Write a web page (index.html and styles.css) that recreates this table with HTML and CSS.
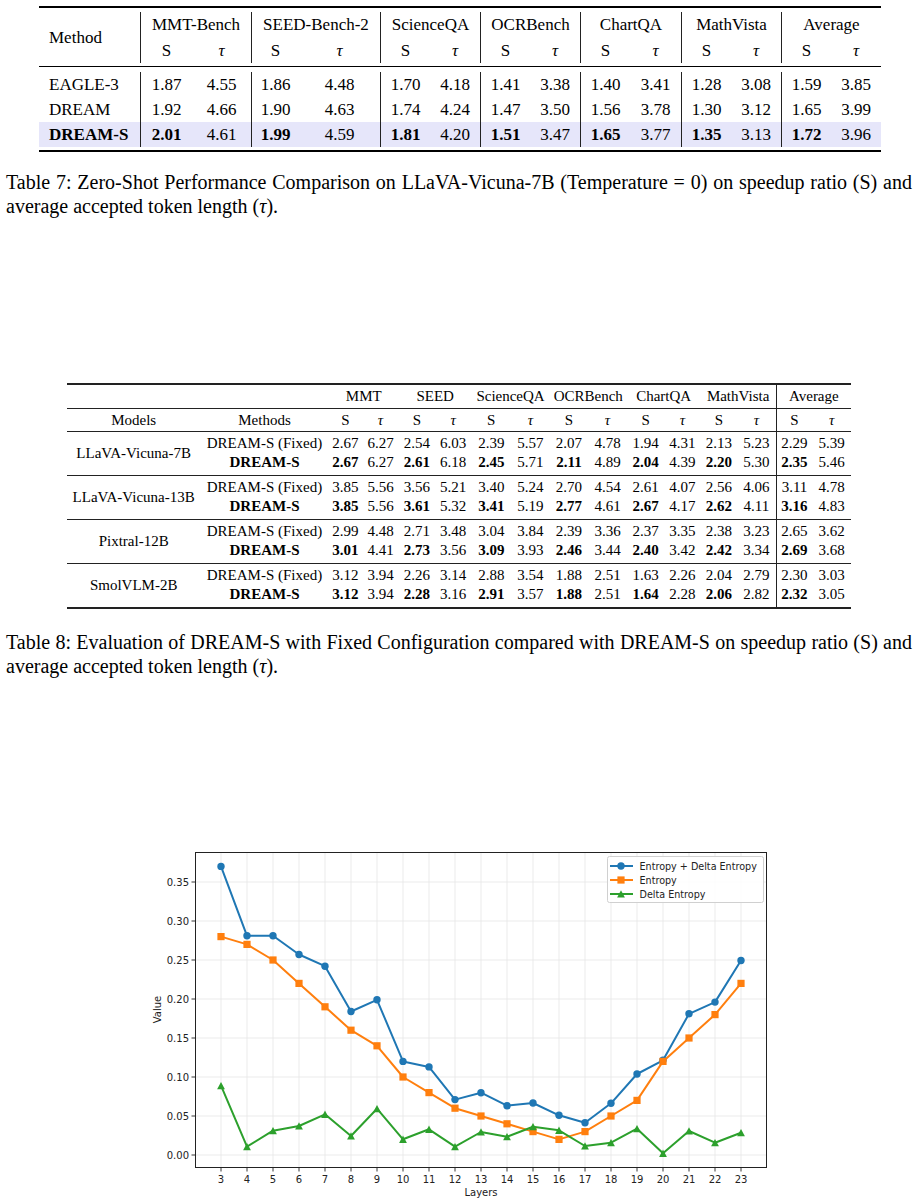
FILE: index.html
```html
<!DOCTYPE html>
<html>
<head>
<meta charset="utf-8">
<link rel="stylesheet" href="styles.css">
</head>
<body>
<div class="page">

<table class="t7">
  <colgroup>
    <col class="c-method"><col class="w52"><col class="w59"><col class="w48"><col class="w81">
    <col class="w50"><col class="w50"><col class="w50"><col class="w50"><col class="w50"><col class="w51">
    <col class="w50"><col class="w50"><col class="w50"><col class="w50">
  </colgroup>
  <tr class="rule-thick"><td colspan="15"></td></tr>
  <tr class="gap4"><td colspan="15"></td></tr>
  <tr class="h1">
    <td rowspan="2" class="mcol">Method</td>
    <td colspan="2" class="vl">MMT-Bench</td>
    <td colspan="2" class="vl">SEED-Bench-2</td>
    <td colspan="2" class="vl">ScienceQA</td>
    <td colspan="2" class="vl">OCRBench</td>
    <td colspan="2" class="vl">ChartQA</td>
    <td colspan="2" class="vl">MathVista</td>
    <td colspan="2" class="vl">Average</td>
  </tr>
  <tr class="h2">
    <td class="vl">S</td><td><i>τ</i></td>
    <td class="vl">S</td><td><i>τ</i></td>
    <td class="vl">S</td><td><i>τ</i></td>
    <td class="vl">S</td><td><i>τ</i></td>
    <td class="vl">S</td><td><i>τ</i></td>
    <td class="vl">S</td><td><i>τ</i></td>
    <td class="vl">S</td><td><i>τ</i></td>
  </tr>
  <tr class="gap3"><td colspan="15"></td></tr>
  <tr class="rule-thin"><td colspan="15"></td></tr>
  <tr class="gap5"><td colspan="15"></td></tr>
  <tr class="row">
    <td class="mcol">EAGLE-3</td>
    <td class="vl">1.87</td><td>4.55</td><td class="vl">1.86</td><td>4.48</td><td class="vl">1.70</td><td>4.18</td>
    <td class="vl">1.41</td><td>3.38</td><td class="vl">1.40</td><td>3.41</td><td class="vl">1.28</td><td>3.08</td>
    <td class="vl">1.59</td><td>3.85</td>
  </tr>
  <tr class="row">
    <td class="mcol">DREAM</td>
    <td class="vl">1.92</td><td>4.66</td><td class="vl">1.90</td><td>4.63</td><td class="vl">1.74</td><td>4.24</td>
    <td class="vl">1.47</td><td>3.50</td><td class="vl">1.56</td><td>3.78</td><td class="vl">1.30</td><td>3.12</td>
    <td class="vl">1.65</td><td>3.99</td>
  </tr>
  <tr class="row hl">
    <td class="mcol"><b>DREAM-S</b></td>
    <td class="vl"><b>2.01</b></td><td>4.61</td><td class="vl"><b>1.99</b></td><td>4.59</td><td class="vl"><b>1.81</b></td><td>4.20</td>
    <td class="vl"><b>1.51</b></td><td>3.47</td><td class="vl"><b>1.65</b></td><td>3.77</td><td class="vl"><b>1.35</b></td><td>3.13</td>
    <td class="vl"><b>1.72</b></td><td>3.96</td>
  </tr>
  <tr class="gap3"><td colspan="15"></td></tr>
  <tr class="rule-thick"><td colspan="15"></td></tr>
</table>

<div class="caption cap7">
  <span class="l1">Table 7: Zero-Shot Performance Comparison on LLaVA-Vicuna-7B (Temperature = 0) on speedup ratio (S) and</span>
  <span class="l2">average accepted token length (<i>τ</i>).</span>
</div>

<table class="t8">
  <colgroup>
    <col class="w133"><col class="w128">
    <col class="w33"><col class="w37"><col class="w36"><col class="w36b"><col class="w40"><col class="w39"><col class="w39"><col class="w39"><col class="w38"><col class="w36"><col class="w36b"><col class="w39">
    <col class="w36b"><col class="w39">
  </colgroup>
  <tr class="th1">
    <td></td><td></td>
    <td colspan="2">MMT</td><td colspan="2">SEED</td><td colspan="2">ScienceQA</td><td colspan="2">OCRBench</td>
    <td colspan="2">ChartQA</td><td colspan="2">MathVista</td><td colspan="2" class="vl">Average</td>
  </tr>
  <tr class="th2">
    <td>Models</td><td>Methods</td>
    <td>S</td><td><i>τ</i></td><td>S</td><td><i>τ</i></td><td>S</td><td><i>τ</i></td><td>S</td><td><i>τ</i></td>
    <td>S</td><td><i>τ</i></td><td>S</td><td><i>τ</i></td><td class="vl">S</td><td><i>τ</i></td>
  </tr>

  <tr class="ga">
    <td rowspan="2" class="model">LLaVA-Vicuna-7B</td><td>DREAM-S (Fixed)</td>
    <td>2.67</td><td>6.27</td><td>2.54</td><td>6.03</td><td>2.39</td><td>5.57</td><td>2.07</td><td>4.78</td>
    <td>1.94</td><td>4.31</td><td>2.13</td><td>5.23</td><td class="vl">2.29</td><td>5.39</td>
  </tr>
  <tr class="gb">
    <td><b>DREAM-S</b></td>
    <td><b>2.67</b></td><td>6.27</td><td><b>2.61</b></td><td>6.18</td><td><b>2.45</b></td><td>5.71</td><td><b>2.11</b></td><td>4.89</td>
    <td><b>2.04</b></td><td>4.39</td><td><b>2.20</b></td><td>5.30</td><td class="vl"><b>2.35</b></td><td>5.46</td>
  </tr>

  <tr class="ga">
    <td rowspan="2" class="model">LLaVA-Vicuna-13B</td><td>DREAM-S (Fixed)</td>
    <td>3.85</td><td>5.56</td><td>3.56</td><td>5.21</td><td>3.40</td><td>5.24</td><td>2.70</td><td>4.54</td>
    <td>2.61</td><td>4.07</td><td>2.56</td><td>4.06</td><td class="vl">3.11</td><td>4.78</td>
  </tr>
  <tr class="gb">
    <td><b>DREAM-S</b></td>
    <td><b>3.85</b></td><td>5.56</td><td><b>3.61</b></td><td>5.32</td><td><b>3.41</b></td><td>5.19</td><td><b>2.77</b></td><td>4.61</td>
    <td><b>2.67</b></td><td>4.17</td><td><b>2.62</b></td><td>4.11</td><td class="vl"><b>3.16</b></td><td>4.83</td>
  </tr>

  <tr class="ga">
    <td rowspan="2" class="model">Pixtral-12B</td><td>DREAM-S (Fixed)</td>
    <td>2.99</td><td>4.48</td><td>2.71</td><td>3.48</td><td>3.04</td><td>3.84</td><td>2.39</td><td>3.36</td>
    <td>2.37</td><td>3.35</td><td>2.38</td><td>3.23</td><td class="vl">2.65</td><td>3.62</td>
  </tr>
  <tr class="gb">
    <td><b>DREAM-S</b></td>
    <td><b>3.01</b></td><td>4.41</td><td><b>2.73</b></td><td>3.56</td><td><b>3.09</b></td><td>3.93</td><td><b>2.46</b></td><td>3.44</td>
    <td><b>2.40</b></td><td>3.42</td><td><b>2.42</b></td><td>3.34</td><td class="vl"><b>2.69</b></td><td>3.68</td>
  </tr>

  <tr class="ga">
    <td rowspan="2" class="model last">SmolVLM-2B</td><td>DREAM-S (Fixed)</td>
    <td>3.12</td><td>3.94</td><td>2.26</td><td>3.14</td><td>2.88</td><td>3.54</td><td>1.88</td><td>2.51</td>
    <td>1.63</td><td>2.26</td><td>2.04</td><td>2.79</td><td class="vl">2.30</td><td>3.03</td>
  </tr>
  <tr class="gb last">
    <td><b>DREAM-S</b></td>
    <td><b>3.12</b></td><td>3.94</td><td><b>2.28</b></td><td>3.16</td><td><b>2.91</b></td><td>3.57</td><td><b>1.88</b></td><td>2.51</td>
    <td><b>1.64</b></td><td>2.28</td><td><b>2.06</b></td><td>2.82</td><td class="vl"><b>2.32</b></td><td>3.05</td>
  </tr>
</table>

<div class="caption cap8">
  <span class="l1">Table 8: Evaluation of DREAM-S with Fixed Configuration compared with DREAM-S on speedup ratio (S) and</span>
  <span class="l2">average accepted token length (<i>τ</i>).</span>
</div>

<svg class="chart" width="920" height="364" viewBox="0 840 920 364" xmlns="http://www.w3.org/2000/svg">
  <defs>
    <marker id="mc" viewBox="0 0 10 10" refX="5" refY="5" markerWidth="10" markerHeight="10" markerUnits="userSpaceOnUse">
      <circle cx="5" cy="5" r="3.7" fill="#1f77b4"/>
    </marker>
    <marker id="ms" viewBox="0 0 10 10" refX="5" refY="5" markerWidth="10" markerHeight="10" markerUnits="userSpaceOnUse">
      <rect x="1.4" y="1.4" width="7.2" height="7.2" fill="#ff7f0e"/>
    </marker>
    <marker id="mt" viewBox="0 0 10 10" refX="5" refY="5" markerWidth="10" markerHeight="10" markerUnits="userSpaceOnUse">
      <polygon points="5,1.2 8.9,8.6 1.1,8.6" fill="#2ca02c"/>
    </marker>
  </defs>

  <g class="grid">
    <line x1="221" y1="852" x2="221" y2="1167"/><line x1="247" y1="852" x2="247" y2="1167"/>
    <line x1="273" y1="852" x2="273" y2="1167"/><line x1="299" y1="852" x2="299" y2="1167"/>
    <line x1="325" y1="852" x2="325" y2="1167"/><line x1="351" y1="852" x2="351" y2="1167"/>
    <line x1="377" y1="852" x2="377" y2="1167"/><line x1="403" y1="852" x2="403" y2="1167"/>
    <line x1="429" y1="852" x2="429" y2="1167"/><line x1="455" y1="852" x2="455" y2="1167"/>
    <line x1="481" y1="852" x2="481" y2="1167"/><line x1="507" y1="852" x2="507" y2="1167"/>
    <line x1="533" y1="852" x2="533" y2="1167"/><line x1="559" y1="852" x2="559" y2="1167"/>
    <line x1="585" y1="852" x2="585" y2="1167"/><line x1="611" y1="852" x2="611" y2="1167"/>
    <line x1="637" y1="852" x2="637" y2="1167"/><line x1="663" y1="852" x2="663" y2="1167"/>
    <line x1="689" y1="852" x2="689" y2="1167"/><line x1="715" y1="852" x2="715" y2="1167"/>
    <line x1="741" y1="852" x2="741" y2="1167"/>
    <line x1="195" y1="1155" x2="767" y2="1155"/><line x1="195" y1="1116" x2="767" y2="1116"/>
    <line x1="195" y1="1077" x2="767" y2="1077"/><line x1="195" y1="1038" x2="767" y2="1038"/>
    <line x1="195" y1="999" x2="767" y2="999"/><line x1="195" y1="960" x2="767" y2="960"/>
    <line x1="195" y1="921" x2="767" y2="921"/><line x1="195" y1="882" x2="767" y2="882"/>
  </g>

  <polyline class="s-blue" marker-start="url(#mc)" marker-mid="url(#mc)" marker-end="url(#mc)"
    points="221,866.4 247,935.8 273,935.8 299,954.5 325,966.2 351,1011.5 377,999.8 403,1061.4 429,1066.9 455,1099.6 481,1092.7 507,1105.7 533,1103 559,1115.3 585,1122.7 611,1103.3 637,1074 663,1060.3 689,1013.8 715,1002.1 741,960.5"/>
  <polyline class="s-orange" marker-start="url(#ms)" marker-mid="url(#ms)" marker-end="url(#ms)"
    points="221,936.6 247,944.4 273,960 299,983.4 325,1006.8 351,1030.2 377,1045.8 403,1077 429,1092.6 455,1108.2 481,1116 507,1123.8 533,1131.6 559,1139.4 585,1131.6 611,1116 637,1100.4 663,1061.4 689,1038 715,1014.6 741,983.4"/>
  <polyline class="s-green" marker-start="url(#mt)" marker-mid="url(#mt)" marker-end="url(#mt)"
    points="221,1085.7 247,1146.7 273,1130.7 299,1126 325,1114.3 351,1136 377,1108.7 403,1139.3 429,1129.3 455,1146.7 481,1132 507,1136.7 533,1126.7 559,1130.3 585,1146 611,1142.7 637,1128.7 663,1153.3 689,1131 715,1142.7 741,1132.7"/>

  <rect class="spine" x="195.5" y="852.5" width="571" height="315"/>

  <g class="ticks">
    <line x1="191.5" y1="1155" x2="195" y2="1155"/><line x1="191.5" y1="1116" x2="195" y2="1116"/>
    <line x1="191.5" y1="1077" x2="195" y2="1077"/><line x1="191.5" y1="1038" x2="195" y2="1038"/>
    <line x1="191.5" y1="999" x2="195" y2="999"/><line x1="191.5" y1="960" x2="195" y2="960"/>
    <line x1="191.5" y1="921" x2="195" y2="921"/><line x1="191.5" y1="882" x2="195" y2="882"/>
    <line x1="221" y1="1168" x2="221" y2="1171.5"/><line x1="247" y1="1168" x2="247" y2="1171.5"/>
    <line x1="273" y1="1168" x2="273" y2="1171.5"/><line x1="299" y1="1168" x2="299" y2="1171.5"/>
    <line x1="325" y1="1168" x2="325" y2="1171.5"/><line x1="351" y1="1168" x2="351" y2="1171.5"/>
    <line x1="377" y1="1168" x2="377" y2="1171.5"/><line x1="403" y1="1168" x2="403" y2="1171.5"/>
    <line x1="429" y1="1168" x2="429" y2="1171.5"/><line x1="455" y1="1168" x2="455" y2="1171.5"/>
    <line x1="481" y1="1168" x2="481" y2="1171.5"/><line x1="507" y1="1168" x2="507" y2="1171.5"/>
    <line x1="533" y1="1168" x2="533" y2="1171.5"/><line x1="559" y1="1168" x2="559" y2="1171.5"/>
    <line x1="585" y1="1168" x2="585" y2="1171.5"/><line x1="611" y1="1168" x2="611" y2="1171.5"/>
    <line x1="637" y1="1168" x2="637" y2="1171.5"/><line x1="663" y1="1168" x2="663" y2="1171.5"/>
    <line x1="689" y1="1168" x2="689" y2="1171.5"/><line x1="715" y1="1168" x2="715" y2="1171.5"/>
    <line x1="741" y1="1168" x2="741" y2="1171.5"/>
  </g>

  <g class="ylab">
    <text x="189" y="1158.5">0.00</text><text x="189" y="1119.5">0.05</text>
    <text x="189" y="1080.5">0.10</text><text x="189" y="1041.5">0.15</text>
    <text x="189" y="1002.5">0.20</text><text x="189" y="963.5">0.25</text>
    <text x="189" y="924.5">0.30</text><text x="189" y="885.5">0.35</text>
  </g>
  <g class="xlab">
    <text x="221" y="1182.5">3</text><text x="247" y="1182.5">4</text><text x="273" y="1182.5">5</text>
    <text x="299" y="1182.5">6</text><text x="325" y="1182.5">7</text><text x="351" y="1182.5">8</text>
    <text x="377" y="1182.5">9</text><text x="403" y="1182.5">10</text><text x="429" y="1182.5">11</text>
    <text x="455" y="1182.5">12</text><text x="481" y="1182.5">13</text><text x="507" y="1182.5">14</text>
    <text x="533" y="1182.5">15</text><text x="559" y="1182.5">16</text><text x="585" y="1182.5">17</text>
    <text x="611" y="1182.5">18</text><text x="637" y="1182.5">19</text><text x="663" y="1182.5">20</text>
    <text x="689" y="1182.5">21</text><text x="715" y="1182.5">22</text><text x="741" y="1182.5">23</text>
  </g>
  <text class="axlab" x="481" y="1196">Layers</text>
  <text class="axlab" x="161" y="1009.5" transform="rotate(-90 161 1009.5)">Value</text>

  <g class="legend">
    <rect class="lg-box" x="607.5" y="856.5" width="156" height="46" rx="2"/>
    <polyline class="s-blue" marker-mid="url(#mc)" points="610,866 621,866 633,866"/>
    <polyline class="s-orange" marker-mid="url(#ms)" points="610,880 621,880 633,880"/>
    <polyline class="s-green" marker-mid="url(#mt)" points="610,894 621,894 633,894"/>
    <text x="639.5" y="869.5">Entropy + Delta Entropy</text>
    <text x="639.5" y="883.5">Entropy</text>
    <text x="639.5" y="897.5">Delta Entropy</text>
  </g>
</svg>

</div>
</body>
</html>
```

FILE: styles.css
```css
html, body {
  margin: 0;
  padding: 0;
  background: #ffffff;
}
body {
  font-family: "Liberation Serif", "Times New Roman", serif;
  color: #000;
}
.page {
  width: 920px;
  padding-top: 6px;
}

/* ---------- Table 7 ---------- */
.t7 {
  margin-left: 39px;
  width: 842px;
  table-layout: fixed;
  border-collapse: separate;
  border-spacing: 0;
  font-size: 17px;
}
.t7 td {
  padding: 0;
  text-align: center;
  white-space: nowrap;
}
.t7 .c-method { width: 101px; }
.w52 { width: 52px; }
.w59 { width: 59px; }
.w48 { width: 48px; }
.w81 { width: 81px; }
.w50 { width: 50px; }
.w51 { width: 51px; }
.t7 .h1 td { height: 26px; line-height: 26px; }
.t7 .h2 td { height: 25px; line-height: 25px; }
.t7 .row td { height: 25px; line-height: 25px; }
.t7 .mcol {
  text-align: left;
  padding-left: 10px;
  vertical-align: middle;
}
.t7 .vl { border-left: 1px solid #222; }
.t7 .hl td { background: #e6e6fa; }
.t7 .rule-thick td { height: 0; padding: 0; border-top: 2px solid #000; line-height: 0; font-size: 0; }
.t7 .rule-thin td { height: 0; padding: 0; border-top: 1px solid #000; line-height: 0; font-size: 0; }
.t7 .gap3 td { height: 3px; line-height: 0; font-size: 0; }
.t7 .gap4 td { height: 4px; line-height: 0; font-size: 0; }
.t7 .gap5 td { height: 5px; line-height: 0; font-size: 0; }

/* ---------- Captions ---------- */
.caption {
  margin-left: 6px;
  width: 906px;
  font-size: 20px;
  line-height: 24.5px;
}
.caption .l1 {
  display: block;
  text-align: justify;
  text-align-last: justify;
  white-space: nowrap;
}
.caption .l2 {
  display: block;
}
.cap7 { margin-top: 17.75px; }
.cap8 { margin-top: 20.75px; }

/* ---------- Table 8 ---------- */
.t8 {
  margin-top: 164.25px;
  margin-left: 67px;
  width: 784px;
  table-layout: fixed;
  border-collapse: separate;
  border-spacing: 0;
  font-size: 15px;
}
.t8 td {
  padding: 0;
  text-align: center;
  white-space: nowrap;
}
.w133 { width: 133px; }
.w128 { width: 128px; }
.w33 { width: 33.5px; }
.w37 { width: 36.5px; }
.w36 { width: 36px; }
.w36b { width: 36.5px; }
.w40 { width: 39.5px; }
.w39 { width: 38.5px; }
.w38 { width: 37.5px; }
.t8 .th1 td {
  border-top: 2px solid #222;
  line-height: 23px;
}
.t8 .th2 td {
  border-top: 1px solid #222;
  line-height: 22px;
}
.t8 .ga td {
  border-top: 1px solid #222;
  line-height: 19px;
  padding-top: 2px;
}
.t8 .gb td {
  line-height: 19px;
  padding-bottom: 3px;
}
.t8 .ga td.model {
  vertical-align: middle;
  padding-bottom: 3px;
}
.t8 .gb.last td,
.t8 td.model.last {
  border-bottom: 2px solid #222;
}
.t8 .vl { border-left: 1px solid #222; }

/* ---------- Chart ---------- */
.chart {
  display: block;
  margin-top: 161.25px;
  font-family: "DejaVu Sans", sans-serif;
}
.grid line {
  stroke: #e6e6e6;
  stroke-width: 0.8;
}
.spine {
  fill: none;
  stroke: #222;
  stroke-width: 1;
}
.ticks line {
  stroke: #222;
  stroke-width: 0.9;
}
.ylab text {
  font-size: 10px;
  fill: #222;
  text-anchor: end;
}
.xlab text {
  font-size: 10px;
  fill: #222;
  text-anchor: middle;
}
.axlab {
  font-size: 10px;
  fill: #222;
  text-anchor: middle;
}
.s-blue, .s-orange, .s-green {
  fill: none;
  stroke-width: 2;
  stroke-linejoin: round;
}
.s-blue { stroke: #1f77b4; }
.s-orange { stroke: #ff7f0e; }
.s-green { stroke: #2ca02c; }
.lg-box {
  fill: #ffffff;
  fill-opacity: 0.85;
  stroke: #d0d0d0;
  stroke-width: 1;
}
.legend text {
  font-size: 9.6px;
  fill: #222;
}
```
